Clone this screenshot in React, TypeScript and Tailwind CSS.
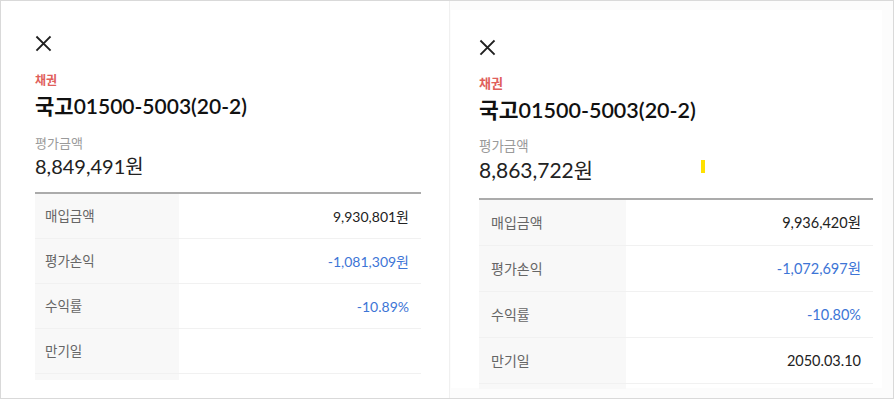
const font = "font-['Lato','Noto_Sans_CJK_KR',sans-serif]";

type Row = { label: string; value: string; blue?: boolean };

function CloseIcon({ size }: { size: number }) {
  return (
    <svg width={size} height={size} viewBox="0 0 16 16" className="block">
      <path d="M2 2 L14 14 M14 2 L2 14" stroke="#1f1f1f" strokeWidth="1.8" strokeLinecap="square" />
    </svg>
  );
}

function LeftPanel({ rows }: { rows: Row[] }) {
  return (
    <div className="w-[449px] h-full pl-[34px] pt-[34px] border-r border-[#f0f0f0]">
      <CloseIcon size={17} />
      <div className="mt-[21px] text-[12px] leading-[16px] font-bold text-[#e0605b]">채권</div>
      <div className="mt-[4px] text-[21px] leading-[26px] font-semibold text-[#111]">국고01500-5003(20-2)</div>
      <div className="mt-[15px] text-[13px] leading-[18px] text-[#9a9a9a]">평가금액</div>
      <div className="mt-[1px] text-[20px] leading-[26px] text-[#222]">8,849,491원</div>
      <div className="mt-[13px] w-[386px] h-[2px] bg-[#ababab]" />
      <div className="w-[386px]">
        {rows.map((r) => (
          <div key={r.label} className="flex h-[45px] border-b border-[#f1f1f1]">
            <div className="w-[144px] bg-[#f8f8f8] pl-[10px] flex items-center text-[13.5px] text-[#666]">{r.label}</div>
            <div className={`flex-1 pr-[12px] flex items-center justify-end text-[14px] ${r.blue ? "text-[#3d75d6]" : "text-[#222]"}`}>
              {r.value}
            </div>
          </div>
        ))}
        <div className="h-[6px] w-[144px] bg-[#f8f8f8]" />
      </div>
    </div>
  );
}

function RightPanel({ rows }: { rows: Row[] }) {
  return (
    <div className="flex-1 h-full bg-[#fcfcfc] pt-[9px] pl-[1px]">
      <div className="w-[431px] h-[378px] bg-white pl-[28px] pt-[29px]">
        <CloseIcon size={17} />
        <div className="mt-[19px] text-[13px] leading-[17px] font-bold text-[#e0605b]">채권</div>
        <div className="mt-[5px] text-[21.5px] leading-[27px] font-semibold text-[#111]">국고01500-5003(20-2)</div>
        <div className="mt-[13px] text-[13.5px] leading-[19px] text-[#9a9a9a]">평가금액</div>
        <div className="relative text-[21px] leading-[27px] text-[#222]">
          8,863,722원
          <span className="absolute left-[222px] top-[4px] w-[4px] h-[13px] bg-[#ffe100]" />
        </div>
        <div className="mt-[15px] w-[394px] h-[2px] bg-[#ababab]" />
        <div className="w-[394px]">
          {rows.map((r) => (
            <div key={r.label} className="flex h-[46px] border-b border-[#f1f1f1]">
              <div className="w-[147px] bg-[#f8f8f8] pl-[12px] flex items-center text-[14px] text-[#666]">{r.label}</div>
              <div className={`flex-1 pr-[12px] flex items-center justify-end text-[14.5px] ${r.blue ? "text-[#3d75d6]" : "text-[#222]"}`}>
                {r.value}
              </div>
            </div>
          ))}
          <div className="h-[5px] w-[147px] bg-[#f8f8f8]" />
        </div>
      </div>
    </div>
  );
}

export default function App() {
  const left: Row[] = [
    { label: "매입금액", value: "9,930,801원" },
    { label: "평가손익", value: "-1,081,309원", blue: true },
    { label: "수익률", value: "-10.89%", blue: true },
    { label: "만기일", value: "" },
  ];
  const right: Row[] = [
    { label: "매입금액", value: "9,936,420원" },
    { label: "평가손익", value: "-1,072,697원", blue: true },
    { label: "수익률", value: "-10.80%", blue: true },
    { label: "만기일", value: "2050.03.10" },
  ];
  return (
    <div className={`w-[894px] h-[399px] border border-[#d9d9d9] bg-white flex overflow-hidden ${font}`}>
      <LeftPanel rows={left} />
      <RightPanel rows={right} />
    </div>
  );
}
